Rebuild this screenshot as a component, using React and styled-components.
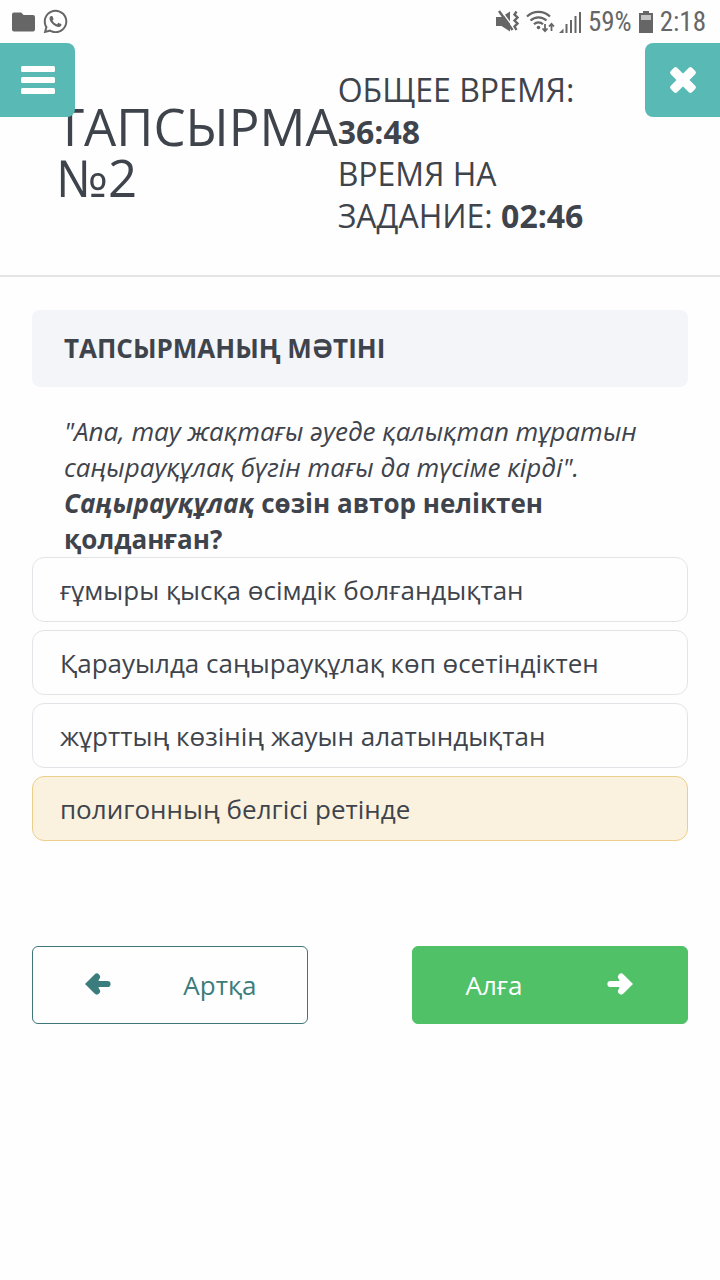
import React, { useState } from 'react';
import styled, { createGlobalStyle } from 'styled-components';
import { FaWhatsapp } from 'react-icons/fa';

const GlobalStyle = createGlobalStyle`
  * {
    box-sizing: border-box;
  }
  body {
    margin: 0;
    background-color: #fefefe;
    color: #3f444c;
    font-family: 'Open Sans', 'Noto Sans', sans-serif;
    font-size: 26px;
    line-height: 36px;
  }
`;

const StatusBar = styled.div`
  display: flex;
  justify-content: space-between;
  align-items: center;
  height: 43px;
  padding: 0 14px 0 12px;
  color: #666;
  svg {
    display: block;
  }
`;
const StatusGroup = styled.div`
  display: flex;
  align-items: center;
  gap: ${({ $tight }) => ($tight ? '4px' : '7px')};
`;
const StatusText = styled.span`
  font-family: 'Roboto Condensed', Roboto, sans-serif;
  font-size: 27px;
`;

const Header = styled.header`
  position: relative;
  display: flex;
  align-items: center;
  padding: 26px 56px 38px;
  border-bottom: 2px solid #e4e4e4;
`;
const CornerButton = styled.button`
  position: absolute;
  top: 0;
  ${({ $side }) => $side}: 0;
  display: flex;
  justify-content: center;
  align-items: center;
  width: 75px;
  height: 74px;
  padding: 0;
  border: none;
  border-radius: ${({ $side }) => ($side === 'left' ? '0 8px 8px 0' : '8px 0 0 8px')};
  background-color: #58b9b5;
  cursor: pointer;
`;
const Title = styled.h1`
  flex: 0 0 min-content;
  margin: 0;
  padding-bottom: 2px;
  font-size: 51px;
  font-weight: 400;
  line-height: 51px;
`;
const Timers = styled.div`
  flex: 1;
  padding-right: 8px;
  font-size: 32px;
  font-weight: 400;
  line-height: 42px;
  p {
    margin: 0;
  }
`;

const Main = styled.main`
  padding: 33px 32px;
`;
const SectionTitle = styled.h2`
  margin: 0;
  padding: 20px 32px;
  border-radius: 8px;
  background-color: #f3f5f9;
  font-size: 26px;
  font-weight: 700;
  line-height: 37px;
`;
const Question = styled.div`
  padding: 26px 32px 0;
  p {
    margin: 0;
  }
`;
const Options = styled.div`
  display: flex;
  flex-direction: column;
  gap: 8px;
`;
const Option = styled.label`
  padding: 14px 27px 13px;
  border: 1px solid ${({ $selected }) => ($selected ? '#ecce8c' : '#e3e4e8')};
  border-radius: 12px;
  background-color: ${({ $selected }) => ($selected ? '#faf2de' : '#fefefe')};
  cursor: pointer;
`;
const HiddenRadio = styled.input`
  position: absolute;
  margin: 0;
  opacity: 0;
`;

const Pager = styled.nav`
  display: flex;
  justify-content: space-between;
  margin-top: 105px;
`;
const PagerButton = styled.button`
  display: flex;
  justify-content: space-between;
  align-items: center;
  width: 42%;
  height: 78px;
  padding: ${({ $primary }) => ($primary ? '0 54px 0 52px' : '0 50px 0 52px')};
  border: 1px solid ${({ $primary }) => ($primary ? '#50c167' : '#3f7677')};
  border-radius: 6px;
  background-color: ${({ $primary }) => ($primary ? '#50c167' : '#fefefe')};
  color: ${({ $primary }) => ($primary ? '#fff' : '#3b7c7c')};
  font: inherit;
  cursor: pointer;
`;

const FolderIcon = () => (
  <svg width="23" height="20" viewBox="0 0 23 20" fill="#666">
    <path d="M2 0.5h7.2l2.4 2.4H21a2 2 0 0 1 2 2V17.5a2 2 0 0 1-2 2H2a2 2 0 0 1-2-2v-15a2 2 0 0 1 2-2z" />
  </svg>
);

const MuteIcon = () => (
  <svg width="23" height="23" viewBox="0 0 23 23" fill="#666">
    <path d="M0 7h5.5L14 1.5v20L5.5 16H0z" />
    <path d="M5 0.5L18 18" stroke="#fefefe" strokeWidth="1.4" />
    <path d="M3 1L16.5 20" stroke="#666" strokeWidth="2.4" />
    <path
      d="M20.5 1.5L18.5 4.5L21.5 7.5L18.5 10.5L21.5 13.5L18.5 16.5L20.5 20"
      fill="none"
      stroke="#666"
      strokeWidth="2.4"
    />
  </svg>
);

const WifiIcon = () => (
  <svg width="29" height="24" viewBox="0 0 29 24" fill="none" stroke="#666" strokeWidth="2.2">
    <path d="M1 6.5C7.5 0.2 17.5 0.2 24 6.5" />
    <path d="M4.5 10.5C9 6.2 16 6.2 20.5 10.5" />
    <path d="M8 14.3C10.5 11.8 14.5 11.8 17 14.3" />
    <circle cx="12.5" cy="17.5" r="1.8" fill="#666" stroke="none" />
    <path
      d="M19 14v7M16.5 18.5l2.5 2.7 2.5-2.7M25.500 21v-7M23 16.5l2.5-2.7 2.5 2.7"
      strokeWidth="1.8"
    />
  </svg>
);

const SignalIcon = () => (
  <svg width="22" height="22" viewBox="0 0 22 22" fill="#666">
    <path d="M4.5 17.5V22H0zM6.5 13h2v9h-2zM11 9h2v13h-2zM15.5 5h2v17h-2zM20 1h2v21h-2z" />
  </svg>
);

const BatteryIcon = () => (
  <svg width="14" height="22" viewBox="0 0 14 22">
    <path d="M4 0h6v2h4v20H0V2h4z" fill="#666" />
    <path d="M2 4h10v5H2z" fill="#c4c4c4" />
  </svg>
);

const BarsIcon = () => (
  <svg width="34" height="28" viewBox="0 0 34 28" fill="#fff">
    <rect width="34" height="6" rx="1.5" />
    <rect y="11" width="34" height="6" rx="1.5" />
    <rect y="22" width="34" height="6" rx="1.5" />
  </svg>
);

const CloseIcon = () => (
  <svg width="28" height="28" viewBox="0 0 28 28" fill="#fff">
    <g transform="rotate(45 14 14)">
      <rect x="-1" y="9.5" width="30" height="9" rx="2.2" />
      <rect x="9.5" y="-1" width="9" height="30" rx="2.2" />
    </g>
  </svg>
);

const ArrowIcon = ({ flip }) => (
  <svg width="26" height="24" viewBox="0 0 26 24" fill="none" stroke="currentColor" strokeLinecap="round">
    <g transform={flip ? 'matrix(-1 0 0 1 26 0)' : undefined}>
      <path d="M3.5 11H20" strokeWidth="6.2" />
      <path d="M14.2 3.7L21.5 11L14.2 18.3" strokeWidth="6.4" />
      <path d="M11.500 5.500L20 11L11.500 16.500L14 11z" fill="currentColor" stroke="none" />
    </g>
  </svg>
);

const answers = [
  'ғұмыры қысқа өсімдік болғандықтан',
  'Қарауылда саңырауқұлақ көп өсетіндіктен',
  'жұрттың көзінің жауын алатындықтан',
  'полигонның белгісі ретінде',
];

const App = () => {
  const [selected, setSelected] = useState(3);

  return (
    <>
      <GlobalStyle />
      <StatusBar>
        <StatusGroup>
          <FolderIcon />
          <FaWhatsapp size={27} />
        </StatusGroup>
        <StatusGroup>
          <MuteIcon />
          <StatusGroup $tight>
            <WifiIcon />
            <SignalIcon />
          </StatusGroup>
          <StatusText>59%</StatusText>
          <BatteryIcon />
          <StatusText>2:18</StatusText>
        </StatusGroup>
      </StatusBar>
      <Header>
        <Title>ТАПСЫРМА №2</Title>
        <Timers>
          <p>
            ОБЩЕЕ ВРЕМЯ: <b>36:48</b>
          </p>
          <p>
            ВРЕМЯ НА ЗАДАНИЕ: <b>02:46</b>
          </p>
        </Timers>
        <CornerButton $side="left" aria-label="Мәзір">
          <BarsIcon />
        </CornerButton>
        <CornerButton $side="right" aria-label="Жабу">
          <CloseIcon />
        </CornerButton>
      </Header>
      <Main>
        <SectionTitle>ТАПСЫРМАНЫҢ МӘТІНІ</SectionTitle>
        <Question>
          <p>
            <em>"Апа, тау жақтағы әуеде қалықтап тұратын саңырауқұлақ бүгін тағы да түсіме кірді".</em>
          </p>
          <p>
            <b>
              <em>Саңырауқұлақ</em> сөзін автор неліктен қолданған?
            </b>
          </p>
        </Question>
        <Options>
          {answers.map((answer, i) => (
            <Option key={answer} $selected={i === selected}>
              <HiddenRadio
                type="radio"
                name="answer"
                checked={i === selected}
                onChange={() => setSelected(i)}
              />
              {answer}
            </Option>
          ))}
        </Options>
        <Pager>
          <PagerButton>
            <ArrowIcon flip />
            Артқа
          </PagerButton>
          <PagerButton $primary>
            Алға
            <ArrowIcon />
          </PagerButton>
        </Pager>
      </Main>
    </>
  );
};

export default App;
